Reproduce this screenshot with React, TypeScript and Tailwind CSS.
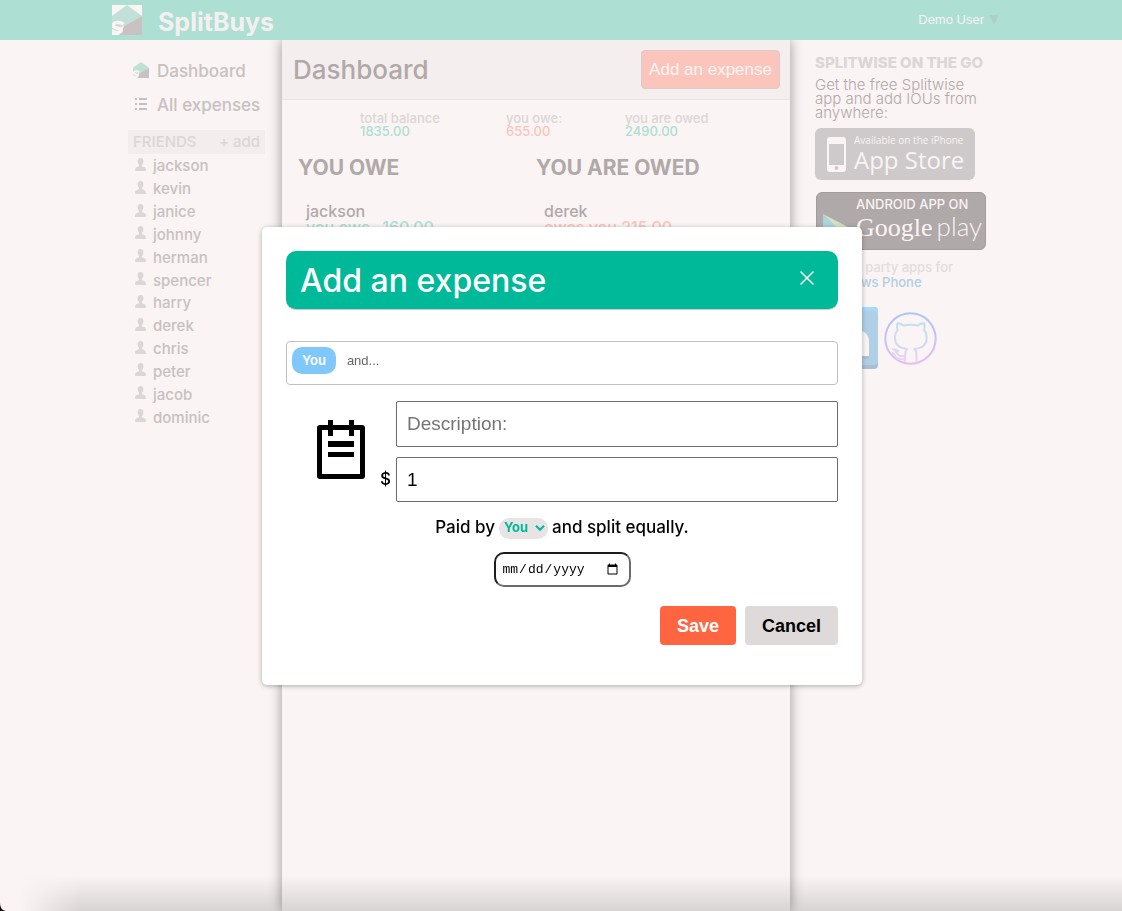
import React from "react";

const friends = [
  "jackson", "kevin", "janice", "johnny", "herman", "spencer",
  "harry", "derek", "chris", "peter", "jacob", "dominic",
];

function Logo({ className, framed }: { className: string; framed?: boolean }) {
  return (
    <svg viewBox="0 0 90 90" className={className} aria-hidden="true">
      {framed && <rect width="90" height="90" fill="#faf4f4" />}
      <polygon points="0,33 45,0 90,33 37,62 0,62" fill="#bfe1d8" />
      <polygon points="90,33 90,90 22,90 37,62" fill="#c9c2c2" />
      <path
        d="M35 58 Q28 52 17 52 Q3 53 3 62 Q4 70 18 71 Q28 72 28 77 Q27 82 17 82 Q8 82 0 77"
        fill="none"
        stroke="#faf4f4"
        strokeWidth="10"
      />
      <path d="M10 62Q16 58 32 63L30 66Q16 65 10 62ZM0 68Q8 74 20 76Q12 79 0 72Z" fill="#c9d6d0" />
    </svg>
  );
}

function PersonIcon() {
  return (
    <svg viewBox="0 0 33 40" className="mb-1 h-[13px] w-[11px] shrink-0" fill="#dcd6d6" aria-hidden="true">
      <path d="M16.500 0C22 0 25.500 3.500 25.500 10C25.500 15 23 19 21 21.500V25C27 27 33 28 33 34V40H0V34C0 28 6 27 12 25V21.500C10 19 7.500 15 7.500 10C7.500 3.500 11 0 16.500 0Z" />
    </svg>
  );
}

function ListIcon() {
  return (
    <svg viewBox="0 0 12 12" className="mb-1 h-3 w-3" fill="#c7c1c1" aria-hidden="true">
      <path d="M0 0h2v2H0zM4 0h8v2H4zM0 5h2v2H0zM4 5h8v2H4zM0 10h2v2H0zM4 10h8v2H4z" />
    </svg>
  );
}

function GithubIcon() {
  return (
    <svg viewBox="0 0 160 160" className="h-[53px] w-[53px]" fill="none" aria-hidden="true">
      <defs>
        <linearGradient id="ring" x1="0" y1="0" x2="0" y2="1">
          <stop offset="0" stopColor="#a9c8f6" />
          <stop offset="1" stopColor="#e6bdf2" />
        </linearGradient>
        <linearGradient id="cat" x1="0" y1="0" x2="0" y2="1">
          <stop offset="0" stopColor="#bfe0f2" />
          <stop offset="1" stopColor="#e9d3f2" />
        </linearGradient>
      </defs>
      <circle cx="80" cy="80" r="76" stroke="url(#ring)" strokeWidth="6" />
      <path
        d="M64 150V126C64 119 66 116 70 112C47 110 33 100 33 78C33 67 36 60 41 54C38 47 38 40 41 34C49 34 55 38 60 41C73 38 88 38 101 41C107 37 114 34 121 34C123 41 123 48 121 54C127 60 129 68 129 78C129 100 115 110 92 112C97 116 98 120 98 127V150M64 133C50 136 42 132 38 122C36 117 32 113 25 112M64 142C47 145 37 141 33 132C31 127 28 124 24 123M33 113L45 119"
        stroke="url(#cat)"
        strokeWidth="6"
        strokeLinejoin="round"
      />
    </svg>
  );
}

function LinkedinIcon() {
  return (
    <svg viewBox="0 0 62 62" className="h-[62px] w-[62px]" aria-hidden="true">
      <rect width="62" height="62" rx="4" fill="#a9c0d3" />
      <rect width="62" height="58" rx="4" fill="#afcfe7" />
      <path d="M0 4Q0 0 4 0H58Q62 0 62 4V7Q61 4 57 4H5Q1 4 0 7Z" fill="#abd9f4" />
      <rect x="9" y="24" width="9" height="26" fill="#faf4f4" />
      <circle cx="13" cy="15" r="5" fill="#faf4f4" />
      <path d="M24 24H32V28Q36 23 42 23Q53 24 53 36V49H44V37Q44 30 38 30Q33 31 33 37V49H24Z" fill="#faf4f4" />
      <path d="M9 49h9v3H9zM24 49h9v3h-9zM44 49h9v3h-9z" fill="#a9c0d3" />
    </svg>
  );
}

function NotepadIcon() {
  return (
    <svg viewBox="0 0 48 59" className="h-[59px] w-12" aria-hidden="true">
      <rect x="2.500" y="7.500" width="43" height="49" rx="0.500" fill="none" stroke="#000" strokeWidth="5" />
      <path d="M11 0h5v16h-5zM32 0h5v16h-5zM11 21h26v6H11zM11 32h26v5H11z" fill="#000" />
    </svg>
  );
}

function Header() {
  return (
    <header className="relative z-10 h-10 bg-[#addfd3]">
      <div className="mx-auto flex h-full max-w-[898px] items-center justify-between">
        <a href="#home" className="flex items-center gap-4 text-[25px] font-bold text-[#f5f0f0]">
          <Logo framed className="h-[30px] w-[30px]" />
          <span className="pt-1.5">SplitBuys</span>
        </a>
        <button className="flex items-center gap-1 pr-2.5 font-['Liberation_Sans',sans-serif] text-[13px] text-[#f7f3f3]">
          Demo User
          <svg viewBox="0 0 10 10" className="h-2.5 w-3" fill="#b0cfc8" aria-hidden="true">
            <path d="M0 0h10L5 10z" />
          </svg>
        </button>
      </div>
    </header>
  );
}

function Sidebar() {
  return (
    <aside className="w-[170px] shrink-0 pl-4 pr-[17px] pt-[15px] text-[#c7c1c1]">
      <nav className="flex flex-col text-[17px] font-medium">
        <a href="#dashboard" className="flex h-[34px] items-center gap-2 pl-[5px]">
          <Logo className="mb-1 h-4 w-4" />
          Dashboard
        </a>
        <a href="#expenses" className="flex h-[34px] items-center gap-2.5 pl-[7px] whitespace-nowrap">
          <ListIcon />
          All expenses
        </a>
      </nav>
      <div className="mt-[7px] flex h-6 items-center justify-between bg-[#f3eded] px-[5px] text-[15px] font-medium text-[#dcd6d6]">
        <h2>FRIENDS</h2>
        <button>+ add</button>
      </div>
      <ul className="mt-px grid h-[274px] grid-rows-12 text-[15px] leading-5 font-medium">
        {friends.map((name) => (
          <li key={name} className="flex items-center gap-[7px] pl-[7px]">
            <PersonIcon />
            {name}
          </li>
        ))}
      </ul>
    </aside>
  );
}

function Dashboard() {
  return (
    <main className="w-[508px] shrink-0 bg-[#faf4f4] shadow-[0_0_12px_rgba(0,0,0,0.38)]">
      <div className="flex h-[60px] items-center justify-between border-b border-[#ebe5e5] bg-[#f4eeee] pl-[11px] pr-2.5">
        <h1 className="text-[26px] font-medium text-[#b0a9a9]">Dashboard</h1>
        <button className="h-[39px] rounded border border-[#d8cbc9] bg-[#fbc5bb] px-[7px] font-['Liberation_Sans',sans-serif] text-[17px] text-[#faf4f4]">
          Add an expense
        </button>
      </div>
      <dl className="flex pl-[78px] pt-3 text-[13px] leading-[13px] font-medium">
        <div className="w-[146px]">
          <dt className="text-[#dcd6d6]">total balance</dt>
          <dd className="text-[#addfd3]">1835.00</dd>
        </div>
        <div className="w-[119px]">
          <dt className="text-[#dcd6d6]">you owe:</dt>
          <dd className="text-[#fbc5bb]">655.00</dd>
        </div>
        <div>
          <dt className="text-[#dcd6d6]">you are owed</dt>
          <dd className="text-[#addfd3]">2490.00</dd>
        </div>
      </dl>
      <div className="flex pl-4 pt-4 text-[#b0a9a9]">
        <section className="w-[238px]">
          <h2 className="text-[21px] leading-7 font-bold">YOU OWE</h2>
          <div className="pl-2 pt-[21px] text-base leading-4 font-medium">
            <p>jackson</p>
            <p className="flex gap-3 text-[#addfd3]"><span>you owe</span><span>160.00</span></p>
          </div>
        </section>
        <section>
          <h2 className="text-[21px] leading-7 font-bold">YOU ARE OWED</h2>
          <div className="pl-2 pt-[21px] text-base leading-4 font-medium">
            <p>derek</p>
            <p className="text-[#fbc5bb]">owes you 215.00</p>
          </div>
        </section>
      </div>
    </main>
  );
}

function Promo() {
  return (
    <aside className="flex w-[220px] shrink-0 flex-col items-start pl-[25px] pt-3.5">
      <h2 className="text-[15px] leading-[18px] font-extrabold whitespace-nowrap text-[#dcd6d6]">SPLITWISE ON THE GO</h2>
      <p className="pt-1.5 pr-4 text-[15px] leading-[14px] font-light text-[#b0a9a9]">
        Get the free Splitwise app and add IOUs from anywhere:
      </p>
      <a href="#ios" className="mt-2 flex h-[52px] w-40 items-center gap-2 rounded-md bg-[#cec9ca] pl-3 font-['Open_Sans',sans-serif] text-[#faf4f4]">
        <svg viewBox="0 0 19 35" className="h-[35px] w-[19px] shrink-0" aria-hidden="true">
          <rect width="19" height="35" rx="3" fill="#faf4f4" />
          <rect x="2" y="7" width="15" height="21" fill="#cec9ca" />
          <circle cx="9.500" cy="31" r="2" fill="#cec9ca" />
        </svg>
        <span className="flex flex-col whitespace-nowrap">
          <span className="text-[10px] leading-3">Available on the iPhone</span>
          <span className="text-2xl leading-7 font-medium">App Store</span>
        </span>
      </a>
      <a href="#android" className="mt-3 ml-px flex h-[58px] w-[170px] gap-[3px] rounded-md border border-[#a29c9c] bg-[#b0a9a9] pl-1.5 text-[#faf4f4]">
        <svg viewBox="0 0 30 34" className="mt-[21px] h-[34px] w-[30px] shrink-0" aria-hidden="true">
          <path d="M0 0L17 17L0 34z" fill="#a9d5db" />
          <path d="M0 0L23 12L17 17z" fill="#d2e3c5" />
          <path d="M17 17L23 12L30 17L23 22z" fill="#f0cfc4" />
          <path d="M17 17L23 22L0 34z" fill="#e6b8b6" />
        </svg>
        <span className="flex flex-col whitespace-nowrap">
          <span className="pt-[3px] text-[13px] leading-4 font-medium">ANDROID APP ON</span>
          <span className="flex items-baseline gap-1 leading-7">
            <span className="font-['Liberation_Serif',serif] text-[26px]">Google</span>
            <span className="font-['Lato',sans-serif] text-[26px] font-light">play</span>
          </span>
        </span>
      </a>
      <p className="flex flex-col pt-2.5 text-[13px] leading-[15px] font-medium text-[#e3dddd]">
        <span>Or third party apps for</span>
        <a href="#windows" className="pl-1.5 text-[#afcfe3]">Windows Phone</a>
      </p>
      <div className="mt-[17px] flex items-center gap-1.5 pl-px">
        <a href="#linkedin" aria-label="LinkedIn"><LinkedinIcon /></a>
        <a href="#github" aria-label="GitHub"><GithubIcon /></a>
      </div>
    </aside>
  );
}

function ExpenseModal() {
  return (
    <div className="fixed inset-0 z-20 flex items-center justify-center pt-px pl-0.5">
      <form
        role="dialog"
        aria-label="Add an expense"
        onSubmit={(e) => e.preventDefault()}
        className="flex w-[600px] max-w-full flex-col rounded-[5px] bg-white px-6 pt-6 pb-10 text-black shadow-[0_1px_5px_rgba(0,0,0,0.3)]"
      >
        <div className="flex h-[59px] items-center justify-between rounded-[10px] border-b border-[#cccccc] bg-[#00b998] pl-3.5 pr-6 text-white">
          <h2 className="pt-0.5 text-[32px] font-medium">Add an expense</h2>
          <button type="button" aria-label="Close" className="pb-1">
            <svg viewBox="0 0 14 14" className="h-3.5 w-3.5" stroke="#fff" strokeWidth="1.500" strokeLinecap="round" aria-hidden="true">
              <path d="M1 1l12 12M13 1L1 13" />
            </svg>
          </button>
        </div>

        <div className="mt-[31px] flex h-11 items-start rounded border border-[#c0c0c0] p-[5px]">
          <span className="flex h-[27px] items-center rounded-[10px] bg-[#80c8fb] px-2.5 text-[13px] font-semibold text-white">You</span>
          <input
            aria-label="Friends to split with"
            placeholder="and..."
            className="h-[27px] min-w-0 grow pl-[11px] font-['Liberation_Sans',sans-serif] text-[13px] outline-none placeholder:text-[#666666]"
          />
        </div>

        <div className="mt-4 flex">
          <div className="w-[94px] shrink-0 pl-[31px] pt-[19px]">
            <NotepadIcon />
          </div>
          <div className="flex grow flex-col gap-2.5 font-['Liberation_Sans',sans-serif] text-[19px]">
            <input
              aria-label="Description"
              placeholder="Description:"
              className="ml-4 h-[46px] rounded-xs border border-[#6b6b6b] px-2.5 outline-none placeholder:text-[#757575]"
            />
            <div className="flex items-center">
              <label htmlFor="amount" className="w-4 font-['Inter',sans-serif] text-[17px] font-medium">$</label>
              <input
                id="amount"
                defaultValue="1"
                className="h-[45px] min-w-0 grow rounded-xs border border-[#6b6b6b] px-2.5 outline-none"
              />
            </div>
          </div>
        </div>

        <div className="mt-3.5 flex h-6 items-center justify-center gap-1 text-[17px] font-medium">
          <label htmlFor="payer">Paid by</label>
          <span className="grid h-[21px] w-[49px] items-center rounded-[10px] bg-[#e8e3e4]">
            <select
              id="payer"
              className="col-start-1 row-start-1 h-[21px] w-full appearance-none bg-transparent pl-[5px] font-['Inter',sans-serif] text-[13px] font-bold text-[#00b998] outline-none"
            >
              <option>You</option>
            </select>
            <svg viewBox="0 0 10 6" className="pointer-events-none col-start-1 row-start-1 mr-[3px] h-1.5 w-2.5 justify-self-end" fill="none" stroke="#00b998" strokeWidth="2" aria-hidden="true">
              <path d="M1 0.800L5 4.800L9 0.800" />
            </svg>
          </span>
          <span>and split equally.</span>
        </div>

        <input
          type="date"
          aria-label="Date"
          className="mt-3 h-[35px] w-[137px] self-center rounded-[10px] border-2 border-t-[#1c1c1c] border-r-[#6b6b6b] border-b-[#6b6b6b] border-l-[#1c1c1c] pl-1.5 pr-2 font-['Liberation_Mono',monospace] text-[13px] outline-none"
        />

        <div className="mt-[19px] flex justify-end gap-[9px] font-['Liberation_Sans',sans-serif] text-lg font-bold">
          <button type="submit" className="h-[39px] rounded bg-[#ff6540] px-[17px] text-white">Save</button>
          <button type="button" className="h-[39px] rounded bg-[#dedada] px-[17px]">Cancel</button>
        </div>
      </form>
    </div>
  );
}

export default function App() {
  return (
    <div className="relative flex min-h-screen flex-col bg-[#faf4f4] font-['Inter',sans-serif]">
      <Header />
      <div className="flex grow justify-center">
        <Sidebar />
        <Dashboard />
        <Promo />
      </div>
      <div className="pointer-events-none absolute inset-x-0 bottom-0 z-10 h-9 bg-linear-to-t from-black/13 to-transparent mask-[linear-gradient(to_right,transparent_20px,black_80px)]" />
      <svg viewBox="0 0 6 8" className="absolute bottom-0 left-0 z-10 h-2 w-1.5" aria-hidden="true">
        <path d="M0 0Q0 7 6 8H0z" fill="#14000a" />
      </svg>
      <ExpenseModal />
    </div>
  );
}
